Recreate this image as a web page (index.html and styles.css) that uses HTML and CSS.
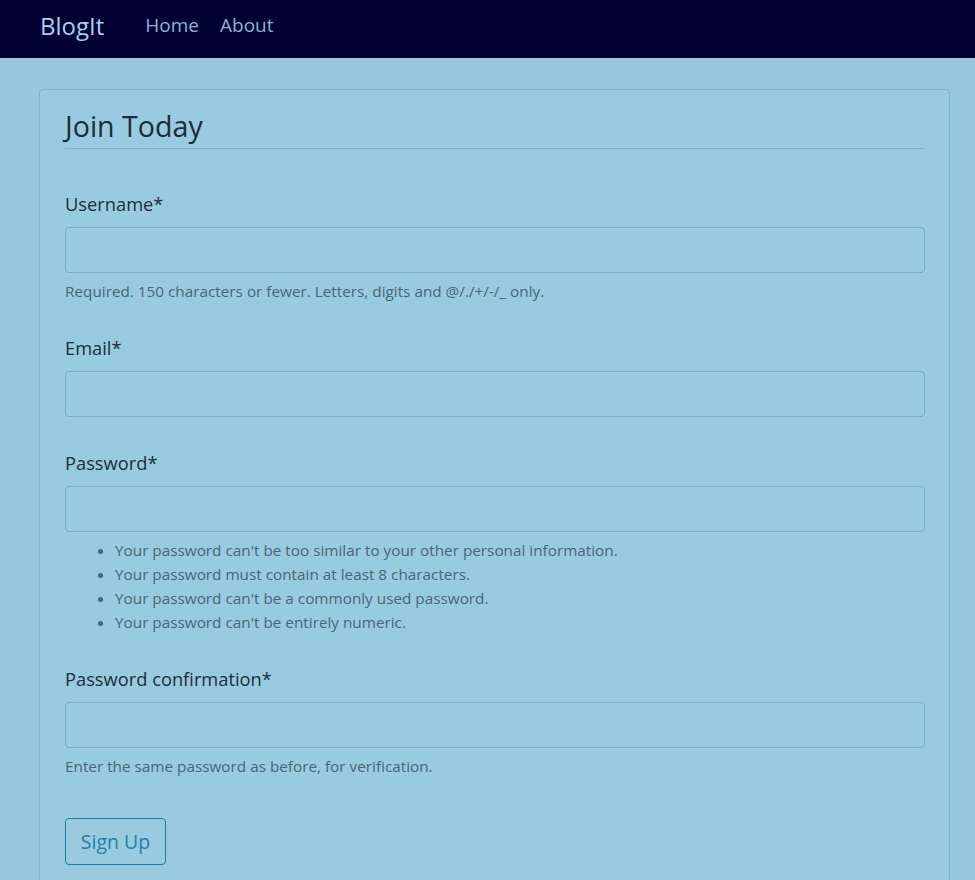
FILE: index.html
```html
<!DOCTYPE html>
<html lang="en">
<head>
<meta charset="utf-8">
<title>BlogIt</title>
<link rel="stylesheet" href="styles.css">
</head>
<body>
<header class="navbar">
  <a class="brand" href="#">BlogIt</a>
  <nav class="nav-links">
    <a href="#">Home</a>
    <a href="#">About</a>
  </nav>
</header>
<main class="main">
  <section class="card">
    <form class="form">
      <h1 class="legend">Join Today</h1>
      <div class="group group-help">
        <label class="label">Username*</label>
        <input class="input" type="text">
        <div class="help">Required. 150 characters or fewer. Letters, digits and @/./+/-/_ only.</div>
      </div>
      <div class="group">
        <label class="label">Email*</label>
        <input class="input" type="email">
      </div>
      <div class="group group-list">
        <label class="label">Password*</label>
        <input class="input" type="password">
        <ul class="help help-list">
          <li>Your password can't be too similar to your other personal information.</li>
          <li>Your password must contain at least 8 characters.</li>
          <li>Your password can't be a commonly used password.</li>
          <li>Your password can't be entirely numeric.</li>
        </ul>
      </div>
      <div class="group group-help">
        <label class="label">Password confirmation*</label>
        <input class="input" type="password">
        <div class="help">Enter the same password as before, for verification.</div>
      </div>
      <div class="actions">
        <button class="btn" type="button">Sign Up</button>
      </div>
    </form>
  </section>
</main>
</body>
</html>
```
FILE: styles.css
```css
* { box-sizing: border-box; }
html, body { margin: 0; padding: 0; }
body {
  background: #95c8dc;
  font-family: "Open Sans", "Noto Sans", sans-serif;
  color: #1d2b3a;
  height: 880px;
  overflow: hidden;
}
.navbar {
  height: 58px;
  background: #020030;
  display: flex;
  align-items: center;
  padding: 0 0 8px 40px;
}
.brand {
  color: #a4d3ee;
  text-decoration: none;
  font-size: 24px;
  margin-right: 41px;
}
.nav-links { display: flex; gap: 21px; }
.nav-links a {
  color: #86b6d2;
  text-decoration: none;
  font-size: 19px;
}
.main { padding: 31px 25px 0 39px; }
.card {
  background: #98cbe0;
  border: 1px solid #80b5cc;
  border-radius: 4px;
  padding: 18px 24px 40px 25px;
  min-height: 900px;
}
.form { display: flex; flex-direction: column; }
.legend {
  margin: 0 0 41px 0;
  font-weight: 400;
  font-size: 28.6px;
  line-height: 36px;
  padding-bottom: 4px;
  border-bottom: 1px solid #7fb3c9;
  color: #1d2b3a;
}
.group { display: flex; flex-direction: column; margin-bottom: 32px; }
.group-help { margin-bottom: 31px; }
.group-list { margin-bottom: 31px; }
.label {
  font-size: 18.3px;
  line-height: 27px;
  padding-bottom: 2px;
  margin-bottom: 8px;
  color: #1f2d3b;
}
.input {
  height: 46px;
  background: #98cbe0;
  border: 1px solid #7aaec4;
  border-radius: 4px;
  font: inherit;
}
.help {
  margin-top: 7px;
  font-size: 15.3px;
  line-height: 23px;
  color: #4b6577;
}
.help-list {
  margin: 6px 0 0 0;
  padding-left: 50px;
  line-height: 24px;
}
.actions { margin-top: 9px; }
.btn {
  height: 47px;
  width: 101px;
  background: transparent;
  border: 1px solid #1d7fa3;
  border-radius: 4px;
  color: #2a7ea8;
  font-family: inherit;
  font-size: 19.5px;
  padding: 0;
}
```
